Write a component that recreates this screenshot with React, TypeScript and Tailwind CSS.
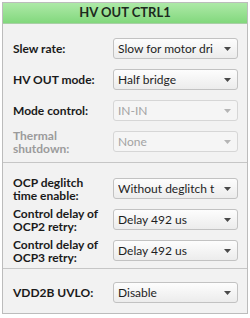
type Row = {
  label: string;
  value: string;
  labelMuted?: boolean;
  disabled?: boolean;
};

const sections: Row[][] = [
  [
    { label: "Slew rate:", value: "Slow for motor dri" },
    { label: "HV OUT mode:", value: "Half bridge" },
    { label: "Mode control:", value: "IN-IN", disabled: true },
    { label: "Thermal shutdown:", value: "None", disabled: true, labelMuted: true },
  ],
  [
    { label: "OCP deglitch time enable:", value: "Without deglitch t" },
    { label: "Control delay of OCP2 retry:", value: "Delay 492 us" },
    { label: "Control delay of OCP3 retry:", value: "Delay 492 us" },
  ],
  [{ label: "VDD2B UVLO:", value: "Disable" }],
];

const sectionPad = ["pt-[9px] pb-[5px]", "pt-[10px] pb-[2px]", "pt-[8px] pb-[5px]"];

function Select({ value, disabled }: { value: string; disabled?: boolean }) {
  return (
    <div
      className={
        disabled
          ? "flex h-[21px] w-[125px] items-center rounded-[3px] border border-[#d6d6d6] bg-[#f5f5f5] pl-[4px] pr-[6px] text-[#a3a3a3]"
          : "flex h-[21px] w-[125px] items-center rounded-[3px] border border-[#c2c2c2] bg-gradient-to-b from-[#fdfdfd] to-[#ececec] pl-[4px] pr-[6px] text-[#1e1e1e]"
      }
    >
      <span className="flex-1 overflow-hidden whitespace-nowrap text-[12px] leading-[15px]">{value}</span>
      <svg width="7" height="4" viewBox="0 0 7 4" className="ml-[2px] shrink-0">
        <path d="M0 0h7L3.5 4z" fill={disabled ? "#b5b5b5" : "#4a4a4a"} />
      </svg>
    </div>
  );
}

export default function App() {
  return (
    <div className="h-[318px] w-[250px] bg-white pt-[2px] pl-[2px]" style={{ fontFamily: "Lato, 'Open Sans', sans-serif" }}>
      <div className="w-[246px] border border-[#bcbcbc] bg-[#f2f2f2]">
        <div className="flex h-[21px] items-center justify-center border-b border-[#a9cfa6] bg-gradient-to-b from-[#ade9a7] to-[#82d87d] text-[13px] font-bold text-[#1d2a1d]">
          HV OUT CTRL1
        </div>
        {sections.map((rows, i) => (
          <div
            key={i}
            className={`${sectionPad[i]} ${i < sections.length - 1 ? "border-b border-[#c6c6c6]" : ""}`}
          >
            {rows.map((row) => (
              <div key={row.label} className="flex h-[31px] items-center">
                <div
                  className={`w-[110px] shrink-0 pl-[10px] pr-[4px] text-[12px] font-bold leading-[13px] ${
                    row.labelMuted ? "text-[#9b9b9b]" : "text-[#1a1a1a]"
                  }`}
                >
                  {row.label}
                </div>
                <Select value={row.value} disabled={row.disabled} />
              </div>
            ))}
          </div>
        ))}
      </div>
    </div>
  );
}
